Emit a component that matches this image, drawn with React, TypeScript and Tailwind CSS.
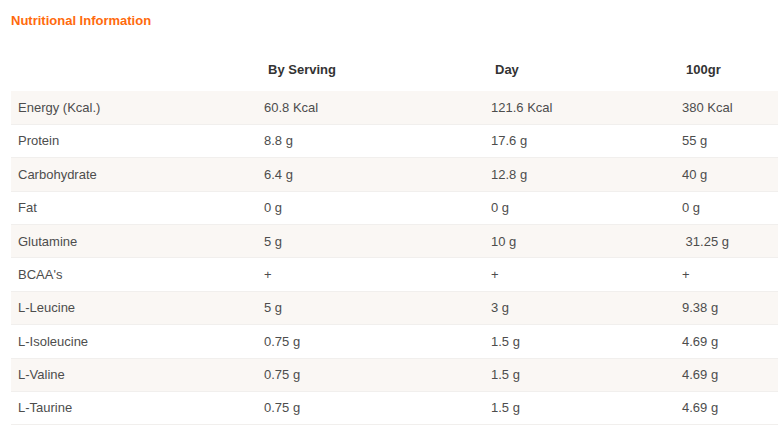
import React from "react";

const rows: [string, string, string, string][] = [
  ["Energy (Kcal.)", "60.8 Kcal", "121.6 Kcal", "380 Kcal"],
  ["Protein", "8.8 g", "17.6 g", "55 g"],
  ["Carbohydrate", "6.4 g", "12.8 g", "40 g"],
  ["Fat", "0 g", "0 g", "0 g"],
  ["Glutamine", "5 g", "10 g", "\u00a031.25 g"],
  ["BCAA's", "+", "+", "+"],
  ["L-Leucine", "5 g", "3 g", "9.38 g"],
  ["L-Isoleucine", "0.75 g", "1.5 g", "4.69 g"],
  ["L-Valine", "0.75 g", "1.5 g", "4.69 g"],
  ["L-Taurine", "0.75 g", "1.5 g", "4.69 g"],
];

export default function App() {
  return (
    <div
      className="w-[778px] h-[437px] bg-white overflow-hidden"
      style={{ fontFamily: '"Liberation Sans", Arial, sans-serif' }}
    >
      <div className="pl-[11px] pt-[13px]">
        <h2 className="text-[13px] leading-[15px] font-bold text-[#ff6a0d]">Nutritional Information</h2>
        <table className="mt-[24px] w-[767px] border-collapse table-fixed text-[13px]">
          <colgroup>
            <col className="w-[246px]" />
            <col className="w-[227px]" />
            <col className="w-[191px]" />
            <col className="w-[103px]" />
          </colgroup>
          <thead>
            <tr className="h-[39px]">
              <th></th>
              <th className="text-left font-bold text-[#333333] pl-[11px] pb-[3px]">By Serving</th>
              <th className="text-left font-bold text-[#333333] pl-[11px] pb-[3px]">Day</th>
              <th className="text-left font-bold text-[#333333] pl-[11px] pb-[3px]">100gr</th>
            </tr>
          </thead>
          <tbody>
            {rows.map((r, i) => (
              <tr
                key={i}
                className={`h-[33.4px] border-b border-[#f1efed] ${i % 2 === 0 ? "bg-[#faf7f4]" : "bg-white"}`}
              >
                {r.map((c, j) => (
                  <td key={j} className="pl-[7px] text-[#4d4d4d] whitespace-pre">
                    {c}
                  </td>
                ))}
              </tr>
            ))}
          </tbody>
        </table>
      </div>
    </div>
  );
}
